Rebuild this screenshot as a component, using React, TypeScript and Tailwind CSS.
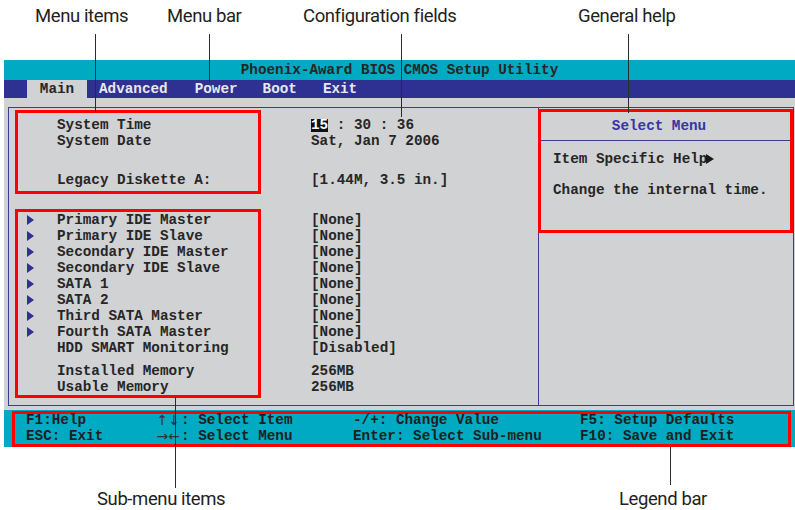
import React from 'react';

type Row = { label: string; value: string; arrow?: boolean };

const devices: Row[] = [
  { label: 'Primary IDE Master', value: '[None]', arrow: true },
  { label: 'Primary IDE Slave', value: '[None]', arrow: true },
  { label: 'Secondary IDE Master', value: '[None]', arrow: true },
  { label: 'Secondary IDE Slave', value: '[None]', arrow: true },
  { label: 'SATA 1', value: '[None]', arrow: true },
  { label: 'SATA 2', value: '[None]', arrow: true },
  { label: 'Third SATA Master', value: '[None]', arrow: true },
  { label: 'Fourth SATA Master', value: '[None]', arrow: true },
  { label: 'HDD SMART Monitoring', value: '[Disabled]' },
];

const legend = [
  ['F1:Help', '↑↓', ': Select Item', '-/+: Change Value', 'F5: Setup Defaults'],
  ['ESC: Exit', '→←', ': Select Menu', 'Enter: Select Sub-menu', 'F10: Save and Exit'],
];

function Tri({ color }: { color: string }) {
  return (
    <svg width="7" height="10" viewBox="0 0 7 10" className="block">
      <polygon points="0,0 7,5 0,10" fill={color} />
    </svg>
  );
}

// callout labels and their leader lines sit on top of the screenshot
function Callout({ text, x, y }: { text: string; x: number; y: number }) {
  return (
    <div
      className="absolute whitespace-nowrap font-['Roboto',sans-serif] text-[18.5px] leading-[20px] tracking-[-0.4px] text-[#231f20]"
      style={{ left: x, top: y }}
    >
      {text}
    </div>
  );
}

function Leader({ x, y, h }: { x: number; y: number; h: number }) {
  return <div className="absolute w-[1.5px] bg-[#2b2b2b]" style={{ left: x, top: y, height: h }} />;
}

export default function App() {
  return (
    <div className="relative w-[795px] h-[510px] overflow-hidden bg-white">
      <div className="h-[60px]" />

      <div className="ml-[4px] w-[791px] whitespace-pre font-['Liberation_Mono',monospace] font-bold text-[14.3px] text-[#262626]">
        {/* title */}
        <div className="h-[20px] bg-[#00aac3] flex items-center justify-center leading-none">
          Phoenix-Award BIOS CMOS Setup Utility
        </div>

        {/* menu bar */}
        <div className="h-[18px] bg-[#2e3192] flex items-center leading-none text-[#e8e8ee]">
          <div className="ml-[23px] w-[60px] h-full bg-[#d1d2d4] text-[#262626] flex items-center justify-center">
            Main
          </div>
          <span className="ml-[12px]">Advanced</span>
          <span className="ml-[27px]">Power</span>
          <span className="ml-[25px]">Boot</span>
          <span className="ml-[26px]">Exit</span>
        </div>

        {/* body */}
        <div className="h-[312px] bg-[#d1d2d4] pt-[9px]">
          <div className="ml-[4px] w-[786px] h-[299px] border border-[#3b3c9a] flex">
            <div className="w-[529px] pl-[6px] pt-[2px] leading-[16px]">
              <div className="flex">
                <div className="w-[246px] h-[84px] border-[3px] border-[#ff0000] pt-[4px] pl-[39px]">
                  <div>System Time</div>
                  <div>System Date</div>
                  <div className="mt-[23px]">Legacy Diskette A:</div>
                </div>
                <div className="ml-[50px] pt-[7px]">
                  <div className="flex items-center h-[16px]">
                    <span className="h-[13px] leading-[13px] bg-[#111] text-white">15</span>
                    <span>{' : 30 : 36'}</span>
                  </div>
                  <div>Sat, Jan 7 2006</div>
                  <div className="mt-[23px]">[1.44M, 3.5 in.]</div>
                </div>
              </div>

              <div className="flex mt-[15px]">
                <div className="w-[246px] h-[189px] border-[3px] border-[#ff0000]">
                  {devices.map((d) => (
                    <div key={d.label} className="h-[16px] flex items-center">
                      <div className="w-[39px] pl-[9px]">{d.arrow && <Tri color="#2e3192" />}</div>
                      <span>{d.label}</span>
                    </div>
                  ))}
                  <div className="mt-[7px] pl-[39px]">Installed Memory</div>
                  <div className="pl-[39px]">Usable Memory</div>
                </div>
                <div className="ml-[50px] pt-[3px]">
                  {devices.map((d) => (
                    <div key={d.label} className="h-[16px]">
                      {d.value}
                    </div>
                  ))}
                  <div className="mt-[7px]">256MB</div>
                  <div>256MB</div>
                </div>
              </div>
            </div>

            <div className="flex-1 border-l border-[#3b3c9a]">
              <div className="-ml-px mt-px h-[124px] border-[3px] border-[#ff0000]">
                <div className="h-[29px] pt-[2px] pr-[13px] border-b border-[#3b3c9a] flex items-center justify-center text-[#3535a8]">
                  Select Menu
                </div>
                <div className="mt-[10px] pl-[12px] leading-[16px] flex items-center">
                  <span>Item Specific Help</span>
                  <span className="-ml-[1px]">
                    <svg width="8" height="10" viewBox="0 0 8 10" className="block">
                      <polygon points="0,0 8,5 0,10" fill="#1a1a1a" />
                    </svg>
                  </span>
                </div>
                <div className="mt-[15px] pl-[12px] leading-[16px]">Change the internal time.</div>
              </div>
            </div>
          </div>
        </div>

        {/* legend */}
        <div className="h-[37px] bg-[#00aac3] pt-[1px]">
          <div className="ml-[8px] w-[779px] h-[36px] border-[3px] border-[#ff0000] pl-[11px]">
            <div className="-mt-[2px] grid grid-cols-[122px_33px_172px_227px_1fr] leading-[16px] text-[#1e1e1e]">
              {legend.map((r) => (
                <React.Fragment key={r[0]}>
                  <div>{r[0]}</div>
                  <div className="text-right pr-[1px] font-normal font-['DejaVu_Sans',sans-serif] text-[14px] text-[#333]">
                    {r[1]}
                  </div>
                  <div>{r[2]}</div>
                  <div>{r[3]}</div>
                  <div>{r[4]}</div>
                </React.Fragment>
              ))}
            </div>
          </div>
        </div>
      </div>

      <Callout text="Menu items" x={35} y={6} />
      <Callout text="Menu bar" x={167} y={6} />
      <Callout text="Configuration fields" x={303} y={6} />
      <Callout text="General help" x={578} y={6} />
      <Callout text="Sub-menu items" x={97} y={489} />
      <Callout text="Legend bar" x={619} y={489} />

      <Leader x={94.5} y={34} h={78} />
      <Leader x={208.5} y={34} h={48} />
      <Leader x={400.5} y={34} h={83} />
      <Leader x={627.5} y={34} h={79} />
      <Leader x={174.5} y={397} h={91} />
      <Leader x={669.5} y={447} h={38} />
    </div>
  );
}
